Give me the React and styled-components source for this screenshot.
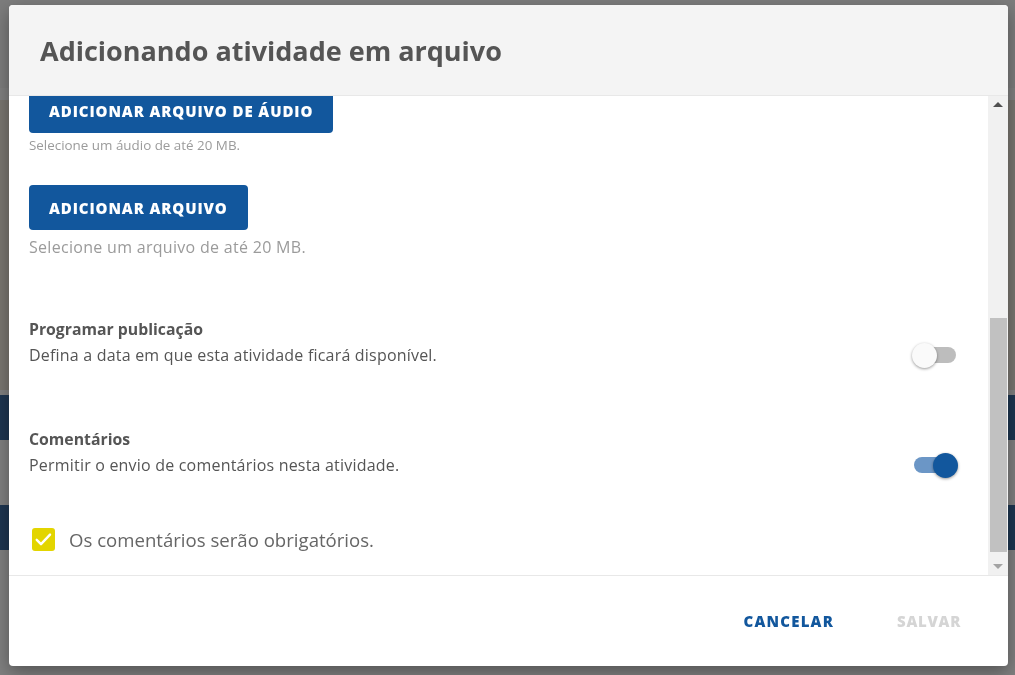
import React, { useLayoutEffect, useRef, useState } from 'react';
import styled, { createGlobalStyle } from 'styled-components';

const GlobalStyle = createGlobalStyle`
  html, body {
    margin: 0;
    height: 100%;
    overflow: hidden;
    font-family: "Open Sans", "Noto Sans", sans-serif;
  }
  #root {
    height: 100%;
  }
`;

const Page = styled.div`
  height: 100%;
  background-color: #fff;
  display: flex;
  flex-direction: column;
`;

const PageBlock = styled.div`
  height: ${props => props.h}px;
  margin-top: ${props => props.mt || 0}px;
  background-color: ${props => props.color};
`;

const Backdrop = styled.div`
  position: fixed;
  inset: 0;
  background-color: rgba(0, 0, 0, 0.5);
`;

const Modal = styled.div`
  position: fixed;
  left: 9px;
  top: 5px;
  width: 999px;
  height: 661px;
  background-color: #fff;
  border-radius: 4px;
  box-shadow: 0 6px 18px rgba(0, 0, 0, 0.35);
  display: flex;
  flex-direction: column;
  overflow: hidden;
`;

const Header = styled.div`
  height: 90px;
  flex-shrink: 0;
  background-color: #f4f4f4;
  border-bottom: 1px solid #e8e8e8;
  display: flex;
  align-items: center;
  padding: 0 31px;
`;

const Title = styled.h2`
  margin: 0;
  font-size: 27px;
  font-weight: 700;
  color: #555;
`;

const BodyFrame = styled.div`
  flex: 1;
  min-height: 0;
  display: flex;
`;

const Body = styled.div`
  flex: 1;
  overflow-y: scroll;
  scrollbar-width: none;
  position: relative;
  padding: 0 20px;

  &::-webkit-scrollbar {
    display: none;
  }
`;

const ScrollBar = styled.div`
  width: 20px;
  flex-shrink: 0;
  background-color: #f1f1f1;
  display: flex;
  flex-direction: column;
`;

const ScrollArrow = styled.div`
  height: 17px;
  flex-shrink: 0;
  display: flex;
  align-items: center;
  justify-content: center;

  &::before {
    content: '';
    border-left: 5px solid transparent;
    border-right: 5px solid transparent;
    ${props =>
      props.up
        ? 'border-bottom: 5px solid #505050;'
        : 'border-top: 5px solid #a3a3a3;'}
  }
`;

const ScrollTrack = styled.div`
  flex: 1;
  display: flex;
  flex-direction: column;
  padding: 0 1px 0 2px;
`;

const ScrollThumb = styled.div`
  background-color: #c1c1c1;
`;

const Field = styled.div`
  display: flex;
  flex-direction: column;
  gap: 8px;
  padding-top: 24px;
`;

const FieldLabel = styled.label`
  font-size: 15px;
  font-weight: 700;
  color: #555;
`;

const Input = styled.div`
  height: ${props => props.h || 42}px;
  border: 1px solid #ccc;
  border-radius: 4px;
`;

const UploadBlock = styled.div`
  display: flex;
  flex-direction: column;
  align-items: flex-start;
  padding-top: ${props => props.pt}px;
`;

const PrimaryButton = styled.button`
  height: 45px;
  padding: 0 20px;
  border: none;
  border-radius: 4px;
  background-color: #12579d;
  color: #fff;
  font-family: inherit;
  font-size: 15px;
  font-weight: 800;
  letter-spacing: 0.9px;
  text-transform: uppercase;
`;

const Hint = styled.p`
  margin: ${props => (props.small ? '3px' : '6px')} 0 0;
  font-size: ${props => (props.small ? '13.4px' : '16px')};
  letter-spacing: ${props => (props.small ? '0' : '0.3px')};
  color: #9b9b9b;
`;

const OptionRow = styled.div`
  display: flex;
  align-items: flex-end;
  justify-content: space-between;
  padding-top: ${props => props.pt}px;
  padding-right: 12px;
`;

const OptionText = styled.div`
  display: flex;
  flex-direction: column;
  gap: 4px;
`;

const OptionTitle = styled.span`
  font-size: 15.8px;
  font-weight: 700;
  color: #555;
`;

const OptionDescription = styled.span`
  font-size: 16px;
  letter-spacing: 0.2px;
  color: #555;
`;

const SwitchTrack = styled.button`
  position: relative;
  width: 42px;
  height: 16px;
  margin: 0 0 3px;
  padding: 0;
  border: none;
  border-radius: 8px;
  background-color: ${props => (props.on ? '#6b96c6' : '#bdbdbd')};
  cursor: pointer;
`;

const SwitchKnob = styled.span`
  position: absolute;
  top: -4.5px;
  left: ${props => (props.on ? '19px' : '-2px')};
  width: 25px;
  height: 25px;
  border-radius: 50%;
  background-color: ${props => (props.on ? '#12579d' : '#fafafa')};
  box-shadow: 0 1px 3px rgba(0, 0, 0, 0.4);
`;

const CheckRow = styled.label`
  display: flex;
  align-items: center;
  gap: 14px;
  padding: 51px 0 35px 3px;
  font-size: 18.6px;
  color: #666;
`;

const CheckBox = styled.span`
  width: 23px;
  height: 23px;
  border-radius: 3px;
  background-color: #e3d500;
  display: flex;
  align-items: center;
  justify-content: center;
`;

const Footer = styled.div`
  height: 90px;
  flex-shrink: 0;
  border-top: 1px solid #e8e8e8;
  display: flex;
  align-items: center;
  justify-content: flex-end;
  gap: 63px;
  padding-right: 47px;
`;

const TextButton = styled.button`
  padding: 0;
  border: none;
  background: none;
  font-family: inherit;
  font-size: 15px;
  font-weight: 800;
  letter-spacing: ${props => (props.disabled ? '0.7px' : '1.2px')};
  color: ${props => (props.disabled ? '#d5d5d5' : '#12579d')};
`;

const Switch = ({ on }) => (
  <SwitchTrack on={on ? 1 : 0}>
    <SwitchKnob on={on ? 1 : 0} />
  </SwitchTrack>
);

export default function App() {
  const bodyRef = useRef(null);
  const audioRef = useRef(null);
  const trackRef = useRef(null);
  const [schedule] = useState(false);
  const [comments] = useState(true);
  const [thumb, setThumb] = useState({ top: 0, height: 0 });

  const updateThumb = () => {
    const el = bodyRef.current;
    const track = trackRef.current;
    if (!el || !track) return;
    const len = track.clientHeight;
    setThumb({
      top: (el.scrollTop / el.scrollHeight) * len,
      height: (el.clientHeight / el.scrollHeight) * len
    });
  };

  useLayoutEffect(() => {
    if (bodyRef.current && audioRef.current) {
      bodyRef.current.scrollTop = audioRef.current.offsetTop + 24 + 8;
    }
    updateThumb();
  }, []);

  return (
    <>
      <GlobalStyle />
      <Page>
        <PageBlock h={88} color="#f8f8f8" />
        <PageBlock h={290} mt={12} color="#f2ebe0" />
        <PageBlock h={45} mt={5} color="#3a6aa0" />
        <PageBlock h={45} mt={65} color="#3a6aa0" />
      </Page>
      <Backdrop />
      <Modal>
        <Header>
          <Title>Adicionando atividade em arquivo</Title>
        </Header>
        <BodyFrame>
          <Body ref={bodyRef} onScroll={updateThumb}>
            <Field>
              <FieldLabel>Título</FieldLabel>
              <Input />
            </Field>
            <Field>
              <FieldLabel>Descrição</FieldLabel>
              <Input h={140} />
            </Field>
            <Field>
              <FieldLabel>Link</FieldLabel>
              <Input />
            </Field>
            <UploadBlock pt={24} ref={audioRef}>
              <PrimaryButton>Adicionar arquivo de áudio</PrimaryButton>
              <Hint small>Selecione um áudio de até 20 MB.</Hint>
            </UploadBlock>
            <UploadBlock pt={31}>
              <PrimaryButton>Adicionar arquivo</PrimaryButton>
              <Hint>Selecione um arquivo de até 20 MB.</Hint>
            </UploadBlock>
            <OptionRow pt={60}>
              <OptionText>
                <OptionTitle>Programar publicação</OptionTitle>
                <OptionDescription>Defina a data em que esta atividade ficará disponível.</OptionDescription>
              </OptionText>
              <Switch on={schedule} />
            </OptionRow>
            <OptionRow pt={62}>
              <OptionText>
                <OptionTitle>Comentários</OptionTitle>
                <OptionDescription>Permitir o envio de comentários nesta atividade.</OptionDescription>
              </OptionText>
              <Switch on={comments} />
            </OptionRow>
            <CheckRow>
              <CheckBox>
                <svg width="19" height="19" viewBox="0 0 16 16">
                  <path d="M2.3 8.3l3.6 3.6 7.6-8" fill="none" stroke="#fff" strokeWidth="2" strokeLinecap="round" strokeLinejoin="round" />
                </svg>
              </CheckBox>
              Os comentários serão obrigatórios.
            </CheckRow>
          </Body>
          <ScrollBar>
            <ScrollArrow up />
            <ScrollTrack ref={trackRef}>
              <ScrollThumb style={{ marginTop: thumb.top, height: thumb.height }} />
            </ScrollTrack>
            <ScrollArrow />
          </ScrollBar>
        </BodyFrame>
        <Footer>
          <TextButton>CANCELAR</TextButton>
          <TextButton disabled>SALVAR</TextButton>
        </Footer>
      </Modal>
    </>
  );
}
